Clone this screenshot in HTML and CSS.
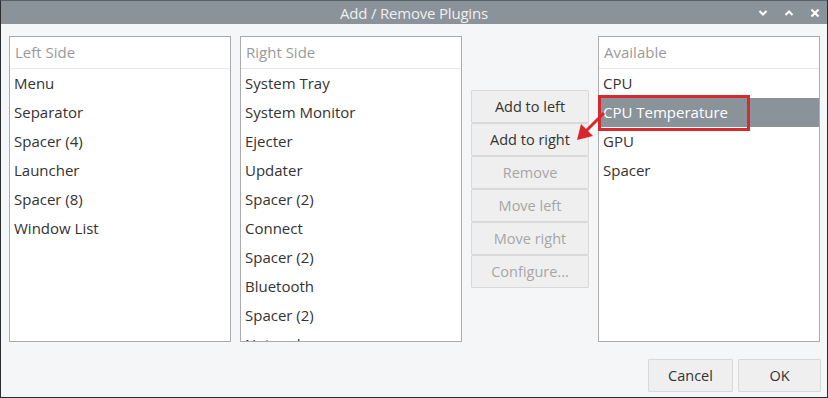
FILE: index.html
```html
<!DOCTYPE html>
<html>
<head>
<meta charset="utf-8">
<link rel="stylesheet" href="styles.css">
</head>
<body>
<div class="window">
  <div class="titlebar">
    <span class="title">Add / Remove Plugins</span>
    <div class="wm">
      <svg width="10" height="8" viewBox="0 0 10 8"><path d="M1.5 2 L5 5.5 L8.5 2" fill="none" stroke="#fff" stroke-width="2"/></svg>
      <svg width="10" height="8" viewBox="0 0 10 8"><path d="M1.5 6 L5 2.5 L8.5 6" fill="none" stroke="#fff" stroke-width="2"/></svg>
      <svg width="10" height="10" viewBox="0 0 10 10"><path d="M1.5 1.5 L8.5 8.5 M8.5 1.5 L1.5 8.5" fill="none" stroke="#fff" stroke-width="2.2"/></svg>
    </div>
  </div>
  <div class="content">
    <div class="panes">
      <div class="list">
        <div class="head">Left Side</div>
        <div class="row">Menu</div>
        <div class="row">Separator</div>
        <div class="row">Spacer (4)</div>
        <div class="row">Launcher</div>
        <div class="row">Spacer (8)</div>
        <div class="row">Window List</div>
      </div>
      <div class="list">
        <div class="head">Right Side</div>
        <div class="row">System Tray</div>
        <div class="row">System Monitor</div>
        <div class="row">Ejecter</div>
        <div class="row">Updater</div>
        <div class="row">Spacer (2)</div>
        <div class="row">Connect</div>
        <div class="row">Spacer (2)</div>
        <div class="row">Bluetooth</div>
        <div class="row">Spacer (2)</div>
        <div class="row">Network</div>
      </div>
      <div class="actions">
        <button class="btn">Add to left</button>
        <button class="btn">Add to right</button>
        <button class="btn dis">Remove</button>
        <button class="btn dis">Move left</button>
        <button class="btn dis">Move right</button>
        <button class="btn dis">Configure...</button>
      </div>
      <div class="list avail">
        <div class="head">Available</div>
        <div class="row">CPU</div>
        <div class="row sel">CPU Temperature</div>
        <div class="row">GPU</div>
        <div class="row">Spacer</div>
        <div class="highlight"></div>
        <svg class="arrow" width="34" height="34" viewBox="0 0 34 34">
          <line x1="30" y1="3" x2="11" y2="22" stroke="#d9262b" stroke-width="3"/>
          <polygon points="3,30 7,14 19,26" fill="#d9262b"/>
        </svg>
      </div>
    </div>
    <div class="footer">
      <button class="btn foot cancel">Cancel</button>
      <button class="btn foot ok">OK</button>
    </div>
  </div>
</div>
</body>
</html>
```
FILE: styles.css
```css
* { box-sizing: border-box; }
html, body { margin: 0; padding: 0; }
body {
  width: 828px;
  height: 398px;
  overflow: hidden;
  font-family: "Open Sans", "DejaVu Sans", sans-serif;
  background: #f5f6f7;
}
.window {
  width: 828px;
  height: 398px;
  border: 1px solid #2a2d30;
  border-top-color: #5a6168;
  display: flex;
  flex-direction: column;
  background: #f5f6f7;
}
.titlebar {
  height: 23px;
  background: #8a929a;
  position: relative;
  display: flex;
  align-items: center;
  justify-content: center;
}
.title {
  color: #eef0f2;
  font-size: 15px;
  letter-spacing: -0.2px;
}
.wm {
  position: absolute;
  right: 7px;
  top: 0;
  height: 23px;
  display: flex;
  align-items: center;
  gap: 16px;
}
.wm svg { display: block; }
.content {
  flex: 1;
  padding: 12px 6px 5px 8px;
  display: flex;
  flex-direction: column;
}
.panes {
  display: flex;
  gap: 9px;
  height: 306px;
}
.list {
  width: 222px;
  height: 306px;
  border: 1px solid #ababab;
  background: #fff;
  overflow: hidden;
  position: relative;
}
.head {
  height: 32px;
  line-height: 31px;
  padding-left: 5px;
  color: #9a9a9a;
  font-size: 15px;
  border-bottom: 1px solid #e6e6e6;
}
.row {
  height: 29px;
  line-height: 29px;
  padding-left: 4px;
  font-size: 15px;
  color: #333;
  white-space: nowrap;
}
.row.sel {
  background: #8a929a;
  color: #fff;
}
.actions {
  width: 118px;
  display: flex;
  flex-direction: column;
  justify-content: center;
}
.btn {
  font-family: "Open Sans", "DejaVu Sans", sans-serif;
  font-size: 14.5px;
  color: #333;
  background: #efefef;
  border: 1px solid #d9d9d9;
  border-radius: 1px;
  height: 33px;
  padding: 0;
  margin: 0;
}
.actions .btn { width: 118px; }
.btn.dis { color: #a6a6a6; }
.highlight {
  position: absolute;
  left: -1px;
  top: 58px;
  width: 152px;
  height: 36px;
  border: 3px solid #d62a2e;
}
.arrow {
  position: absolute;
  left: -25px;
  top: 73px;
  overflow: visible;
}
.avail { overflow: visible; }
.footer {
  display: flex;
  justify-content: flex-end;
  gap: 5px;
  margin-top: 17px;
}
.foot { height: 33px; }
.cancel { width: 85px; }
.ok { width: 83px; }
```
